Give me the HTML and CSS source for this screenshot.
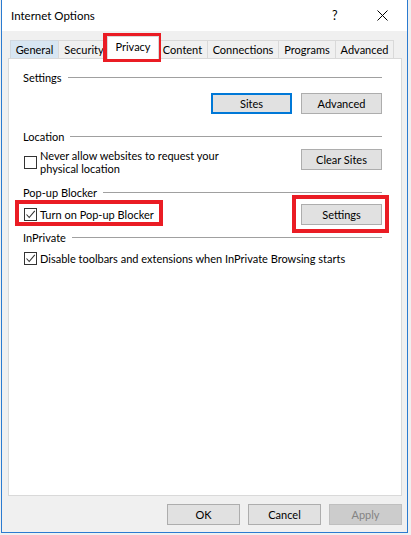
FILE: index.html
```html
<!DOCTYPE html>
<html>
<head>
<meta charset="utf-8">
<link rel="stylesheet" href="styles.css">
</head>
<body>
<div class="screen">
  <div class="window">
    <div class="titlebar">
      <span class="title">Internet Options</span>
      <span class="help">?</span>
      <span class="close"><svg width="11" height="11" viewBox="0 0 11 11"><path d="M0.5 0.5 L10.5 10.5 M10.5 0.5 L0.5 10.5" stroke="#000" stroke-width="1" fill="none"/></svg></span>
    </div>
    <div class="body">
      <div class="tabs">
        <div class="tab hover">General</div>
        <div class="tab">Security</div>
        <div class="tab selected">Privacy</div>
        <div class="tab">Content</div>
        <div class="tab">Connections</div>
        <div class="tab">Programs</div>
        <div class="tab last">Advanced</div>
      </div>
      <div class="panel">
        <div class="group-head"><span>Settings</span><i class="rule"></i></div>
        <div class="row row-buttons">
          <button class="btn focused">Sites</button>
          <button class="btn">Advanced</button>
        </div>
        <div class="group-head gh-location"><span>Location</span><i class="rule"></i></div>
        <div class="row row-location">
          <div class="check"><span class="box"></span><span class="label">Never allow websites to request your<br>physical location</span></div>
          <button class="btn">Clear Sites</button>
        </div>
        <div class="group-head gh-popup"><span>Pop-up Blocker</span><i class="rule"></i></div>
        <div class="row row-popup">
          <div class="check"><span class="box checked"><svg width="11" height="11" viewBox="0 0 11 11"><path d="M1.5 5.5 L4.2 8.5 L9.8 1.8" stroke="#333" stroke-width="1.1" fill="none"/></svg></span><span class="label">Turn on Pop-up Blocker</span></div>
          <button class="btn">Settings</button>
        </div>
        <div class="group-head gh-inprivate"><span>InPrivate</span><i class="rule"></i></div>
        <div class="row row-inprivate">
          <div class="check"><span class="box checked"><svg width="11" height="11" viewBox="0 0 11 11"><path d="M1.5 5.5 L4.2 8.5 L9.8 1.8" stroke="#333" stroke-width="1.1" fill="none"/></svg></span><span class="label">Disable toolbars and extensions when InPrivate Browsing starts</span></div>
        </div>
      </div>
      <div class="footer">
        <button class="btn fbtn">OK</button>
        <button class="btn fbtn">Cancel</button>
        <button class="btn fbtn disabled">Apply</button>
      </div>
    </div>
  </div>
  <div class="mark mark-privacy"></div>
  <div class="mark mark-popup"></div>
  <div class="mark mark-settings"></div>
</div>
</body>
</html>
```

FILE: styles.css
```css
* { box-sizing: border-box; }
html, body { margin: 0; padding: 0; }
body {
  background: #f0f0f0;
  font-family: "Segoe UI", Lato, "Noto Sans", sans-serif;
  font-size: 11px;
  color: #000;
}
.screen {
  position: relative;
  width: 411px;
  height: 535px;
  overflow: hidden;
}
.window {
  margin-left: 1px;
  width: 407px;
  height: 533px;
  border: 1px solid #2b7bd0;
  border-top: none;
  background: #f0f0f0;
  display: flex;
  flex-direction: column;
}
.titlebar {
  height: 31px;
  background: #fff;
  display: flex;
  align-items: center;
  padding-left: 9px;
}
.title { flex: 1; line-height: 16px; font-size: 11.5px; }
.help { font-size: 12.5px; width: 45px; line-height: 16px; }
.close { width: 22px; margin-right: 8px; display: flex; align-items: center; height: 11px; }
.close svg { display: block; }

.body { flex: 1; display: flex; flex-direction: column; }

.tabs {
  margin-top: 9px;
  padding-left: 8px;
  height: 18px;
  display: grid;
  grid-template-columns: 48px 51px 48px 50px 71px 57px 59px;
  grid-template-rows: 18px;
  align-items: end;
}
.tab {
  height: 18px;
  border: 1px solid #d9d9d9;
  border-right: none;
  border-bottom: none;
  background: #f0f0f0;
  text-align: center;
  line-height: 17px;
  white-space: nowrap;
}
.tab.last { border-right: 1px solid #d9d9d9; }
.tab.hover { background: #d8e6f2; border-color: #d0d8e0; }
.tab.selected {
  position: relative;
  z-index: 2;
  background: #fff;
  height: 23px;
  margin: 0 -2px -1px -2px;
  border-right: 1px solid #d9d9d9;
  line-height: 19px;
}

.panel {
  margin: 0 5px 0 6px;
  height: 438px;
  background: #fff;
  border: 1px solid #d9d9d9;
  padding: 11px 19px 0 14px;
}
.group-head {
  display: flex;
  align-items: center;
  height: 15px;
  line-height: 15px;
}
.group-head .rule {
  flex: 1;
  height: 1px;
  background: #a0a0a0;
  margin-left: 6px;
}
.gh-location { margin-top: 15px; }
.gh-popup { margin-top: 10px; }
.gh-inprivate { margin-top: 5px; }

.row { display: flex; align-items: center; }
.row-buttons { justify-content: flex-end; margin-top: 8px; gap: 9px; }
.row-location { justify-content: space-between; align-items: flex-start; margin-top: 5px; }
.row-popup { justify-content: space-between; margin-top: 4px; }
.row-inprivate { margin-top: 7px; }

.check { display: flex; align-items: center; padding-left: 1px; }
.label { line-height: 13px; margin-left: 3px; white-space: nowrap; }
.box {
  width: 13px;
  height: 13px;
  border: 1px solid #333;
  background: #fff;
  flex: none;
  display: flex;
  align-items: center;
  justify-content: center;
}
.box svg { display: block; }

.btn {
  font-family: inherit;
  font-size: 11px;
  color: #000;
  height: 21px;
  width: 81px;
  background: #e1e1e1;
  border: 1px solid #adadad;
  padding: 0;
  margin: 0;
  line-height: 18px;
}
.btn.focused { border: 2px solid #0078d7; }

.footer {
  margin-top: 8px;
  display: flex;
  justify-content: flex-end;
  gap: 8px;
  padding-right: 5px;
}
.fbtn { width: 73px; }
.fbtn.disabled { background: #cccccc; border-color: #bfbfbf; color: #838383; }

.mark {
  position: absolute;
  border: 4px solid #ea1c24;
}
.mark-privacy { left: 103px; top: 33px; width: 58px; height: 29px; }
.mark-popup { left: 15px; top: 200px; width: 148px; height: 26px; }
.mark-settings { left: 292px; top: 195px; width: 97px; height: 38px; }
```
